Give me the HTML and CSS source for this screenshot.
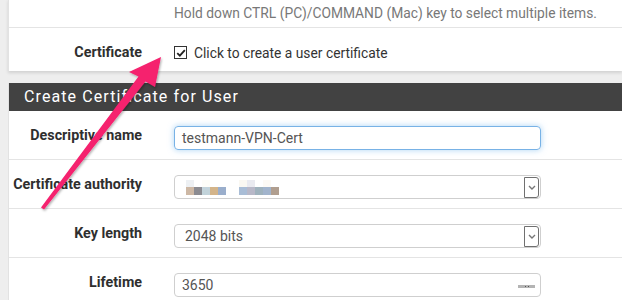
FILE: index.html
```html
<!DOCTYPE html>
<html lang="en">
<head>
    <meta charset="UTF-8">
    <title>Create Certificate for User</title>
    <link rel="stylesheet" href="styles.css">
</head>
<body>
    <div class="page">
        <!-- Group membership panel (bottom part) -->
        <div class="panel top-panel">
            <div class="help-row">
                <span class="help">Hold down CTRL (PC)/COMMAND (Mac) key to select multiple items.</span>
            </div>
            <div class="row cert-row">
                <label class="label">Certificate</label>
                <div class="check">
                    <span class="box">
                        <svg viewBox="0 0 12 12" width="10" height="10"><path d="M1.5 6.2 L4.6 9.2 L10.6 2.6" fill="none" stroke="#222" stroke-width="2.2"/></svg>
                    </span>
                    <span>Click to create a user certificate</span>
                </div>
            </div>
        </div>

        <!-- Certificate panel -->
        <div class="panel cert-panel">
            <div class="panel-heading">Create Certificate for User</div>
            <div class="row">
                <label class="label">Descriptive name</label>
                <div class="field focus">testmann-VPN-Cert</div>
            </div>
            <div class="row">
                <label class="label">Certificate authority</label>
                <div class="field select">
                    <span class="value mosaic">
                        <span class="blk"><i style="background:#edf0f3"></i><i style="background:#fff"></i><i style="background:#fdfdf8"></i><i style="background:#fff"></i><i style="background:#fff"></i>
                            <i style="background:#cdb8a5"></i><i style="background:#8b8b91"></i><i style="background:#c2d3da"></i><i style="background:#d3b48a"></i><i style="background:#9aaecc"></i></span>
                        <span class="blk"><i style="background:#faf8f2"></i><i style="background:#e9eaf0"></i><i style="background:#fff"></i><i style="background:#fdfaf5"></i><i style="background:#fff"></i>
                            <i style="background:#a9bdd6"></i><i style="background:#b8b8c8"></i><i style="background:#9fb2bd"></i><i style="background:#a2b4cc"></i><i style="background:#b09e8f"></i></span>
                    </span>
                    <span class="arrow"><svg viewBox="0 0 8 5" width="8" height="5"><path d="M1 1 L4 4 L7 1" fill="none" stroke="#777" stroke-width="1.4"/></svg></span>
                </div>
            </div>
            <div class="row">
                <label class="label">Key length</label>
                <div class="field select">
                    <span class="value">2048 bits</span>
                    <span class="arrow"><svg viewBox="0 0 8 5" width="8" height="5"><path d="M1 1 L4 4 L7 1" fill="none" stroke="#777" stroke-width="1.4"/></svg></span>
                </div>
            </div>
            <div class="row">
                <label class="label">Lifetime</label>
                <div class="field number">
                    <span>3650</span>
                    <span class="spin"><i></i><i></i></span>
                </div>
            </div>
        </div>
    </div>

    <!-- Annotation arrow drawn over the form -->
    <svg class="annotation" viewBox="0 0 622 300" width="622" height="300">
        <defs>
            <filter id="shadow" x="-20%" y="-20%" width="140%" height="140%">
                <feDropShadow dx="1" dy="1.5" stdDeviation="1.2" flood-color="#000" flood-opacity="0.3"/>
            </filter>
        </defs>
        <polygon filter="url(#shadow)" fill="#f5206e"
                 points="161,57 155,87 145.5,81.5 44,209.5 41,207.5 138.5,76.5 129,72"/>
    </svg>
</body>
</html>
```

FILE: styles.css
```css
body {
    margin: 0;
    background-color: #eeeeee;
    font-family: Roboto, "Liberation Sans", sans-serif;
    font-size: 14px;
    color: #333;
    overflow: hidden;
}

.page {
    padding-left: 8px;
    width: 614px;
}

.panel {
    background-color: #fff;
    border-left: 1px solid #e2e2e2;
}

.top-panel {
    box-shadow: 0 2px 3px rgba(0, 0, 0, 0.12);
    margin-bottom: 12px;
}

.help-row {
    height: 28px;
    border-bottom: 1px solid #e4e4e4;
    padding-left: 165px;
    display: flex;
    align-items: center;
    margin-top: -1px;
}

.help {
    color: #787878;
    font-size: 13.8px;
}

.row {
    display: flex;
    align-items: flex-start;
    border-bottom: 1px solid #e4e4e4;
    padding-top: 15px;
    box-sizing: content-box;
    height: 33px;
}

.cert-row {
    height: 37px;
    padding-top: 6px;
    border-bottom: none;
    align-items: center;
}

.label {
    width: 133px;
    text-align: right;
    font-weight: bold;
    font-size: 14.3px;
    white-space: nowrap;
    direction: rtl;
    color: #2f2f2f;
}

.row .label {
    line-height: 19px;
}

.check {
    margin-left: 32px;
    display: flex;
    align-items: center;
    gap: 7px;
    font-size: 13.8px;
    color: #333;
}

.box {
    width: 11px;
    height: 11px;
    border: 1px solid #333;
    display: flex;
    align-items: center;
    justify-content: center;
    background: #fff;
}

.panel-heading {
    background-color: #424242;
    color: #fff;
    height: 28px;
    line-height: 28px;
    padding-left: 15px;
    font-size: 16px;
    letter-spacing: 1.1px;
}

.field {
    margin-left: 32px;
    width: 367px;
    height: 24px;
    box-sizing: border-box;
    border: 1px solid #cfcfcf;
    border-radius: 4px;
    display: flex;
    align-items: center;
    padding-left: 7px;
    color: #555;
    font-size: 14px;
}

.focus {
    border-color: #78b2e6;
    box-shadow: 0 0 6px rgba(102, 175, 233, 0.55);
}

.select {
    padding-left: 10px;
    padding-right: 1px;
}

.select .value {
    flex: 1;
}

.arrow {
    width: 15px;
    height: 21px;
    box-sizing: border-box;
    border: 1px solid #707070;
    border-radius: 0 3px 3px 0;
    display: flex;
    align-items: center;
    justify-content: center;
}

.mosaic {
    display: flex;
    gap: 13px;
    margin-left: 1px;
}

.blk {
    display: grid;
    grid-template-columns: repeat(5, 8px);
    grid-template-rows: 7px 8px;
}

.blk i {
    display: block;
}

.number {
    justify-content: space-between;
    padding-right: 5px;
}

.spin {
    width: 17px;
    height: 3px;
    background: #b4b4b4;
    margin-top: 3px;
    display: flex;
    justify-content: center;
    gap: 2px;
    padding-top: 1px;
    box-sizing: border-box;
}

.spin i {
    width: 1px;
    height: 1px;
    background: #555;
}

.annotation {
    position: absolute;
    left: 0;
    top: 0;
    pointer-events: none;
}
```
